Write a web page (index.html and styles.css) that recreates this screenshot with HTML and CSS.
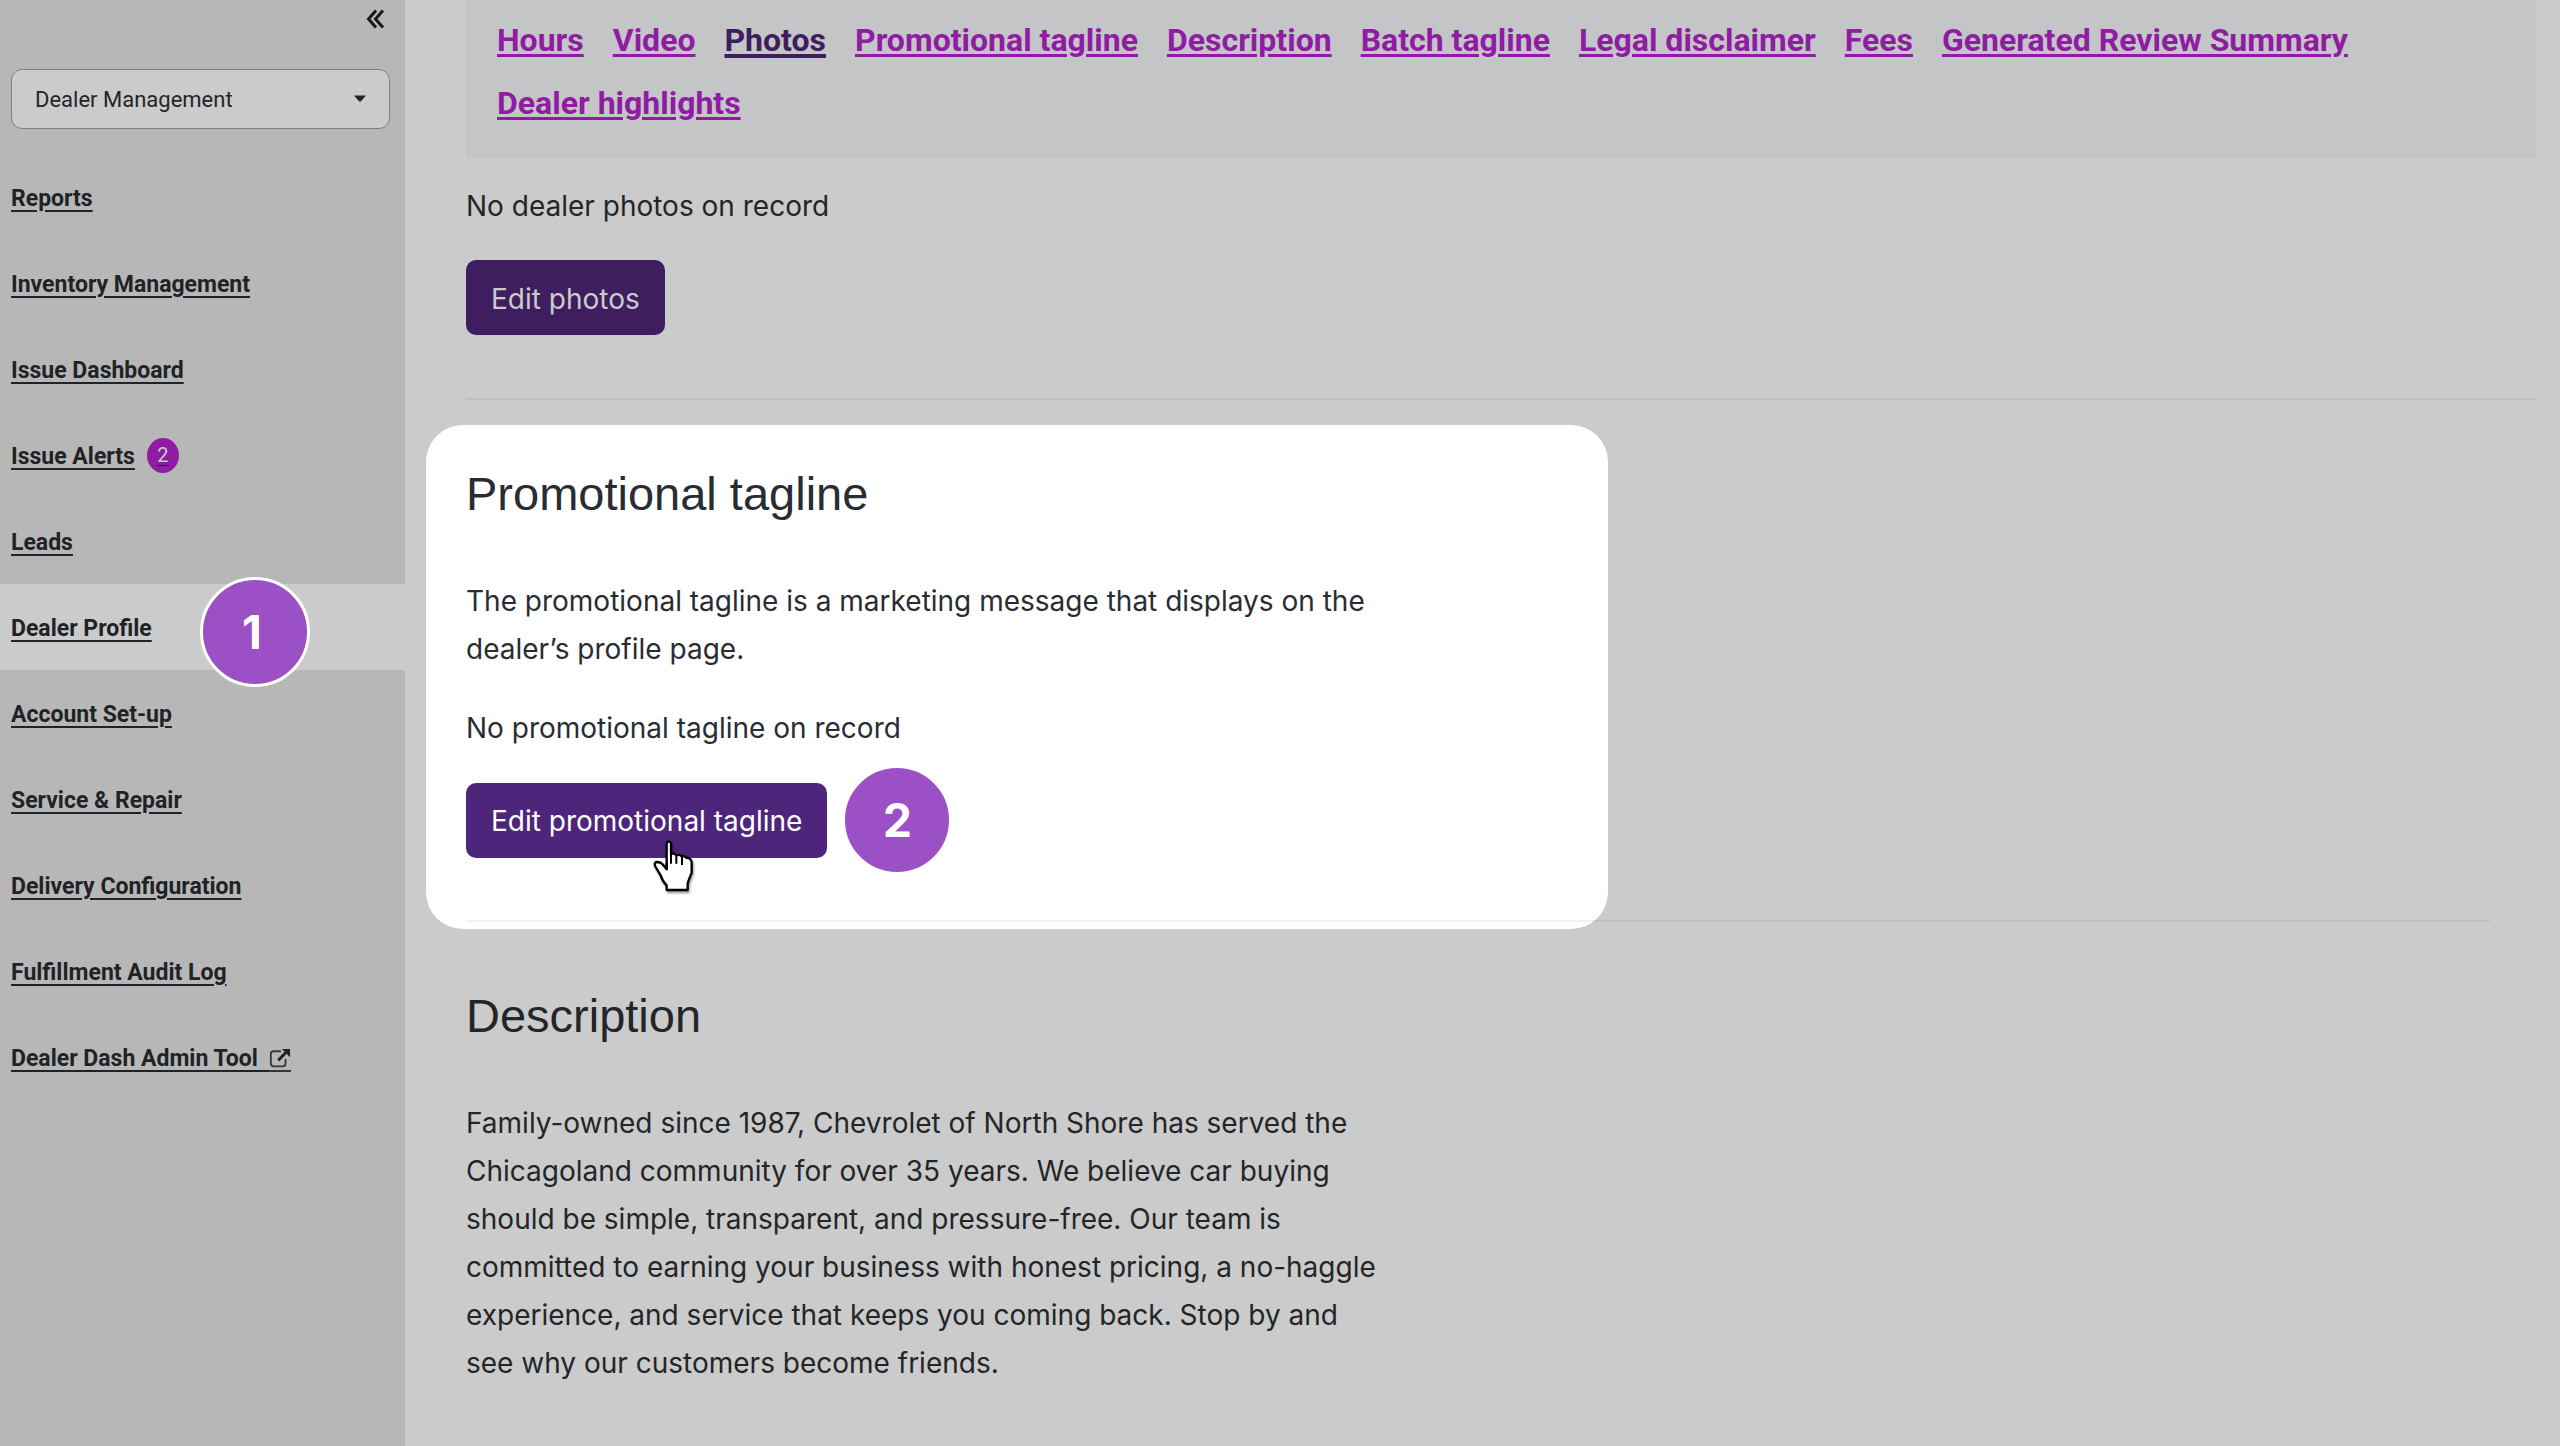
FILE: index.html
```html
<!DOCTYPE html>
<html lang="en">
<head>
<meta charset="utf-8">
<meta name="viewport" content="width=device-width, initial-scale=1">
<title>Dealer Profile</title>
<link rel="stylesheet" href="styles.css">
</head>
<body>
<div class="app">
  <aside class="sidebar">
    <div class="sidebar-top">
      <button class="collapse" type="button" aria-label="Collapse menu">
        <svg width="24" height="24" viewBox="0 0 24 24" fill="none" stroke="#16181a" stroke-width="3"><path d="M13 3.500 5.500 12 13 20.500M20 3.500 12.500 12 20 20.500"/></svg>
      </button>
    </div>
    <div class="area-picker">
      <select class="area-select" aria-label="Area">
        <option>Dealer Management</option>
      </select>
      <svg class="caret" width="12" height="7" viewBox="0 0 12 7"><path d="M0 .5h12L6.800 6.500H5.200z" fill="#1f2326"/></svg>
    </div>
    <nav aria-label="Main">
      <ul class="menu">
        <li class="menu-row"><a class="menu-link" href="#reports">Reports</a></li>
        <li class="menu-row"><a class="menu-link" href="#inventory">Inventory Management</a></li>
        <li class="menu-row"><a class="menu-link" href="#issues">Issue Dashboard</a></li>
        <li class="menu-row"><a class="menu-link" href="#alerts">Issue Alerts</a><a class="badge" href="#alerts" aria-label="2 alerts">2</a></li>
        <li class="menu-row"><a class="menu-link" href="#leads">Leads</a></li>
        <li class="menu-row current"><a class="menu-link" href="#profile" aria-current="page">Dealer Profile</a><span class="step step-menu">1</span></li>
        <li class="menu-row"><a class="menu-link" href="#account">Account Set-up</a></li>
        <li class="menu-row"><a class="menu-link" href="#service">Service &amp; Repair</a></li>
        <li class="menu-row"><a class="menu-link" href="#delivery">Delivery Configuration</a></li>
        <li class="menu-row"><a class="menu-link" href="#audit">Fulfillment Audit Log</a></li>
        <li class="menu-row"><a class="menu-link external" href="#admin">Dealer Dash Admin Tool&nbsp;
          <svg class="external-icon" width="22" height="24" viewBox="0 0 22 24" fill="none"><path d="M12 3.500H4A3 3 0 0 0 1 6.500V17A3 3 0 0 0 4 20H14A3 3 0 0 0 17 17V12" stroke="#33373a" stroke-width="2"/><path d="M9 13.500 17.500 5" stroke="#1f2326" stroke-width="3.200"/><path d="M13 1h9v9z" fill="#1f2326"/></svg></a></li>
      </ul>
    </nav>
  </aside>

  <main class="content">
    <nav class="jump" aria-label="On this page">
      <a class="jump-link" href="#hours">Hours</a>
      <a class="jump-link" href="#video">Video</a>
      <a class="jump-link active" href="#photos">Photos</a>
      <a class="jump-link" href="#tagline">Promotional tagline</a>
      <a class="jump-link" href="#description">Description</a>
      <a class="jump-link" href="#batch">Batch tagline</a>
      <a class="jump-link" href="#legal">Legal disclaimer</a>
      <a class="jump-link" href="#fees">Fees</a>
      <a class="jump-link" href="#summary">Generated Review Summary</a>
      <a class="jump-link" href="#highlights">Dealer highlights</a>
    </nav>

    <section class="photos" id="photos">
      <p class="text">No dealer photos on record</p>
      <button class="action" type="button">Edit photos</button>
    </section>
    <hr class="rule">

    <section class="spotlight" id="tagline">
      <h2 class="heading">Promotional tagline</h2>
      <p class="text intro">The promotional tagline is a marketing message that displays on the dealer’s profile page.</p>
      <p class="text">No promotional tagline on record</p>
      <div class="action-row">
        <button class="action bright" type="button">Edit promotional tagline</button>
        <span class="step">2</span>
        <svg class="pointer" width="50" height="60" viewBox="0 30 150 180" aria-hidden="true"><path d="M50 42Q50 35 56 35Q63 35 63 42V72Q72 68 79 76Q88 72 96 80Q104 76 110 84Q121 82 125 96V128Q118 145 113 160V180H50V166Q38 155 32 136L15 108Q12 97 20 96Q34 96 40 106L50 118Z" fill="#fff" stroke="#000" stroke-width="7" stroke-linejoin="round"/><path d="M50 98V120M63 70V101M79 76V101M96 80V105" stroke="#000" stroke-width="6"/></svg>
      </div>
    </section>
    <hr class="rule rule-inset">

    <section class="description" id="description">
      <h2 class="heading">Description</h2>
      <p class="text">Family-owned since 1987, Chevrolet of North Shore has served the Chicagoland community for over 35 years. We believe car buying should be simple, transparent, and pressure-free. Our team is committed to earning your business with honest pricing, a no-haggle experience, and service that keeps you coming back. Stop by and see why our customers become friends.</p>
    </section>
  </main>
</div>
</body>
</html>
```
FILE: styles.css
```css
* { box-sizing: border-box; }

body {
  margin: 0;
  background: #cbcbcb;
  color: #222629;
  font-family: Inter, "Liberation Sans", sans-serif;
  font-size: 28px;
  line-height: 48px;
}

.app {
  display: grid;
  grid-template-columns: 405px minmax(0, 1fr);
  min-height: 100vh;
}

/* Sidebar */
.sidebar {
  background: #b7b7b7;
  font-family: Roboto, "Liberation Sans", sans-serif;
}

.sidebar-top {
  display: flex;
  justify-content: flex-end;
  padding: 7px 18px;
}

.collapse {
  width: 24px;
  height: 24px;
  padding: 0;
  border: 0;
  background: none;
}

.collapse svg { display: block; }

.area-picker {
  position: relative;
  margin: 31px 15px 25px 11px;
}

.area-select {
  display: block;
  width: 100%;
  height: 60px;
  padding: 2px 48px 0 23px;
  border: 1px solid #808080;
  border-radius: 11px;
  appearance: none;
  background: #cbcbcb;
  color: #222629;
  font: 22px/30px Roboto, "Liberation Sans", sans-serif;
}

.caret {
  position: absolute;
  top: 26px;
  right: 24px;
  pointer-events: none;
}

.menu {
  margin: 0;
  padding: 0;
  list-style: none;
}

.menu-row {
  position: relative;
  display: flex;
  align-items: center;
  gap: 12px;
  height: 86px;
  padding-left: 11px;
}

.current { background: #cbcbcb; }

.menu-link {
  padding-top: 3px;
  color: #1f2326;
  font-size: 23px;
  font-weight: 700;
  line-height: 32px;
  text-decoration-thickness: 2px;
  text-underline-offset: 4px;
}

.external-icon {
  border-bottom: 2px solid #33373a;
  vertical-align: -6px;
}

.badge {
  width: 32px;
  height: 35px;
  border-radius: 50%;
  background: #8f1ca3;
  color: #cbcbcb;
  font-size: 20px;
  line-height: 35px;
  text-align: center;
  text-decoration: underline 1px #2b1030;
  text-underline-offset: 3px;
}

/* Numbered walkthrough markers */
.step {
  display: grid;
  place-items: center;
  width: 110px;
  height: 110px;
  border: 3px solid #fff;
  border-radius: 50%;
  background: #9b50c6;
  color: #fff;
  font: 700 46px/56px Inter, "Liberation Sans", sans-serif;
}

.step-menu {
  position: absolute;
  top: -7px;
  left: 200px;
  padding-right: 6px;
}

/* Content */
.content { padding: 0 24px 60px 61px; }

.jump {
  display: flex;
  flex-wrap: wrap;
  gap: 15px 29px;
  padding: 16px 30px 31px 31px;
  background: #c4c5c7;
}

.jump-link {
  color: #8f1ca3;
  font-family: Roboto, "Liberation Sans", sans-serif;
  font-size: 32px;
  font-weight: 700;
  text-decoration-thickness: 3px;
  text-underline-offset: 3px;
}

.jump-link.active {
  color: #3e1e5f;
  text-decoration-thickness: 4px;
}

.photos { padding: 24px 0 63px; }

.text {
  max-width: 920px;
  margin: 0;
}

.intro { margin-bottom: 31px; }

.heading {
  margin: 0 0 55px;
  font: 400 47px/56px "Liberation Sans", Arial, sans-serif;
}

.action {
  display: block;
  height: 75px;
  margin: 0;
  padding: 2px 25px 0;
  border: 0;
  border-radius: 10px;
  background: #3e1e5f;
  color: #cbcbcb;
  font: 28px/48px Inter, "Liberation Sans", sans-serif;
}

.photos .action { margin-top: 30px; }

.rule {
  position: relative;
  height: 2px;
  margin: 0;
  border: 0;
  background: rgba(0, 0, 0, 0.05);
}

.spotlight {
  max-width: 1182px;
  margin: 25px 0 0 -40px;
  padding: 41px 40px 54px;
  border-radius: 37px;
  background: #fff;
  color: #292c33;
}

.action-row {
  position: relative;
  display: flex;
  align-items: center;
  gap: 15px;
  margin-top: 13px;
}

.action.bright {
  background: #4d267b;
  color: #fff;
}

.pointer {
  position: absolute;
  top: 75px;
  left: 184px;
  filter: drop-shadow(1px 2px 1px rgba(0, 0, 0, 0.4));
}

/* The divider crosses the bottom edge of the highlighted card */
.rule-inset { margin: -9px 46px 0 0; }

.description { padding-top: 66px; }
```
